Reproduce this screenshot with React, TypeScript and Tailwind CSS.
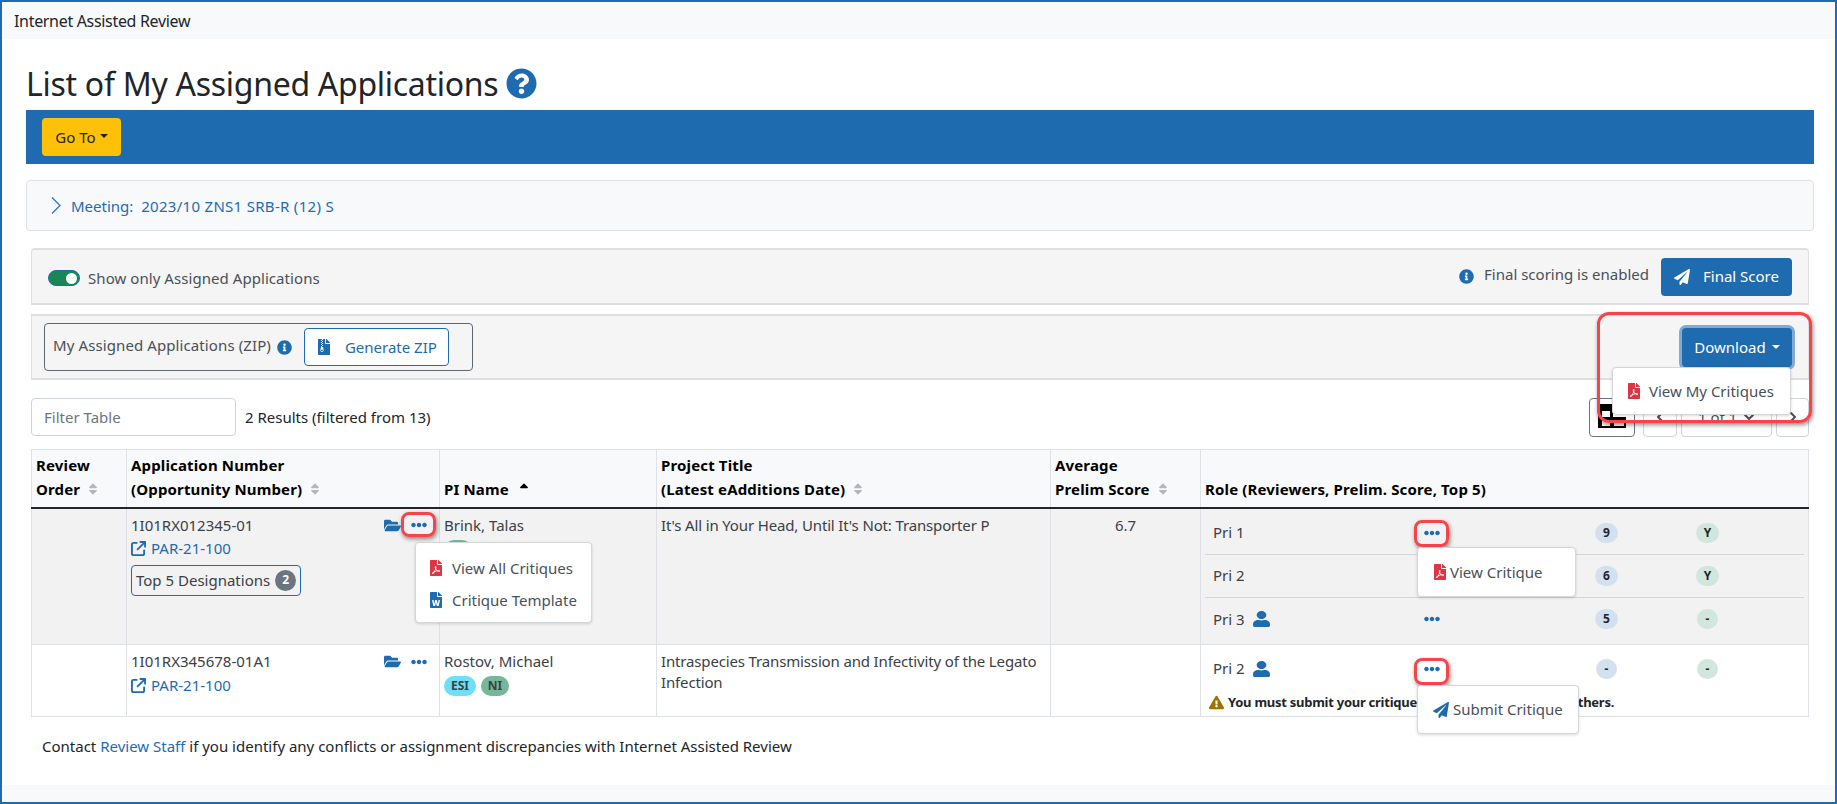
import { FaEllipsisH, FaExclamationTriangle, FaFileArchive, FaFilePdf, FaFileWord, FaFolderOpen, FaInfoCircle, FaPaperPlane, FaQuestionCircle, FaSort, FaSortUp, FaUser } from 'react-icons/fa'
import { FaArrowUpRightFromSquare } from 'react-icons/fa6'
import { ChevronDown, ChevronLeft, ChevronRight } from 'lucide-react'
import type { ReactNode } from 'react'

const BLUE = 'text-[#1f6bb0]'
const TH = 'border border-b-2 border-[#dee2e6] border-b-[#212529] px-1 pb-[6px] text-left leading-6 tracking-[0.01em]'

function RedBox({ className }: { className: string }) {
  return (
    <div
      className={`pointer-events-none absolute border-[3px] border-[#f8434b] shadow-[1px_2px_4px_rgba(0,0,0,0.45)] ${className}`}
    />
  )
}

function Menu({ className, children }: { className: string; children: ReactNode }) {
  return (
    <div className={`absolute z-10 rounded border border-[#d5d6d8] bg-white text-[#495057] shadow-[0_1px_3px_rgba(0,0,0,0.15)] ${className}`}>
      {children}
    </div>
  )
}

function Pill({ label, tone }: { label: string; tone: 'blue' | 'green' }) {
  const narrow = label === '-'
  return (
    <span
      className={`flex h-5 items-center justify-center rounded-full text-[12px] font-bold text-[#212529] ${
        tone === 'blue' ? 'bg-[#d2e1f0]' : 'bg-[#d1e7dd]'
      } ${narrow ? 'ml-px w-[21px]' : 'w-[23px]'}`}
    >
      {label}
    </span>
  )
}

function SortHead({ children }: { children: ReactNode }) {
  return (
    <span className="inline-flex items-center gap-1.5">
      {children}
      <FaSort className="size-[14px] text-[#b4b7ba]" />
    </span>
  )
}

function RoleRow({ label, user, a, b, line }: { label: string; user?: boolean; a: string; b: string; line?: boolean }) {
  return (
    <div className={`grid h-[43px] grid-cols-[211px_171px_101px_1fr] items-center pl-2 ${line ? 'border-b border-[#d5d6d8]' : ''}`}>
      <span className="flex items-center gap-2">
        {label}
        {user && <FaUser preserveAspectRatio="none" className={`h-4 w-[17px] ${BLUE}`} />}
      </span>
      <FaEllipsisH className={`size-4 ${BLUE}`} />
      <Pill label={a} tone="blue" />
      <Pill label={b} tone="green" />
    </div>
  )
}

function GridGlitch() {
  return (
    <svg viewBox="0 0 28 24" className="absolute top-[5px] left-[8px] h-6 w-7">
      <path d="M0 0h15v13h13v11H0z" fill="#000" />
      <rect x="4" y="7" width="8" height="6" fill="#fff" />
      <rect x="4" y="16" width="8" height="6" fill="#fff" />
      <rect x="16" y="16" width="10" height="6" fill="#fff" />
    </svg>
  )
}

export default function App() {
  return (
    <div className="relative h-[804px] w-[1837px] overflow-hidden border-2 border-[#1f6bb0] bg-white font-['Noto_Sans',sans-serif] text-[15px] text-[#212529]">
      <div className="flex h-[37px] items-center bg-[#f8f9fa] pl-3 text-base tracking-[-0.02em] shadow-[0_1px_2px_rgba(0,0,0,0.08)]">
        Internet Assisted Review
      </div>

      <div className="flex h-[763px] flex-col bg-white pr-[21px] pl-6">
        <h1 className="mt-[19px] mb-px flex h-[51px] items-center gap-2 text-[32px] leading-none tracking-[-0.28px]">
          List of My Assigned Applications
          <FaQuestionCircle className={`size-[31px] ${BLUE}`} />
        </h1>
        <div className="flex h-[54px] items-center bg-[#1f6bb0] pl-4">
          <button className="flex h-[38px] w-[79px] items-center justify-center gap-1 rounded bg-[#ffc107] text-[#212529]">
            Go To
            <span className="mb-0.5 border-x-[4px] border-t-[4px] border-x-transparent border-t-[#212529]" />
          </button>
        </div>

        <div className={`mt-4 flex h-[51px] items-center gap-2.5 rounded border border-[#dee2e6] bg-[#f8f9fa] pl-6 ${BLUE}`}>
          <svg viewBox="0 0 10 17" className="h-[17px] w-[10px]" fill="none" stroke="#2a6fc9" strokeWidth="1.2">
            <path d="M1 .5 9 8.5 1 16.5" />
          </svg>
          <span className="mt-0.5 whitespace-pre">
            Meeting:  <span className="tracking-[0.3px]">2023/10 ZNS1 SRB-R (12) S</span>
          </span>
        </div>

        <div className="mt-[17px] mr-[5px] ml-[5px] flex h-[57px] items-center justify-between rounded-t border-x border-y-2 border-[#dfdfdf] bg-[#f5f5f5] pr-4 pl-4 text-[#495057]">
          <div className="flex items-center gap-2 pt-[3px] tracking-[0.06px]">
            <span className="flex h-4 w-8 items-center justify-end rounded-full border border-[#1f6bb0] bg-[#198754] pr-0.5">
              <span className="size-[11px] rounded-full bg-white" />
            </span>
            Show only Assigned Applications
          </div>
          <div className="flex items-center">
            <FaInfoCircle className={`mr-2.5 size-[15px] ${BLUE}`} />
            <span className="mb-1">Final scoring is enabled</span>
            <button className="ml-3 flex h-[38px] w-[131px] items-center justify-center gap-[13px] rounded bg-[#1f6bb0] text-white">
              <FaPaperPlane className="size-4" />
              Final Score
            </button>
          </div>
        </div>

        <div className="mt-[9px] mr-[5px] ml-[5px] flex h-[66px] items-center justify-between border-x border-y-2 border-[#dfdfdf] bg-[#f5f5f5] pr-4 pl-[12px]">
          <div className="flex h-[48px] w-[429px] items-center rounded border border-[#5f6870] pl-[8px] text-[#495057]">
            <span className="mb-1 tracking-[0.1px]">My Assigned Applications (ZIP)</span>
            <FaInfoCircle className={`ml-1.5 size-[15px] ${BLUE}`} />
            <button className={`ml-3 flex h-[38px] w-[145px] items-center gap-[13px] rounded border border-[#1f6bb0] bg-white pl-[11px] ${BLUE}`}>
              <FaFileArchive className="size-4" />
              Generate ZIP
            </button>
          </div>
          <button className="flex h-[39px] w-[110px] items-center justify-center gap-1.5 rounded bg-[#1f6bb0] text-white shadow-[0_0_0_3px_#84a9d3]">
            Download
            <span className="border-x-[4px] border-t-[4px] border-x-transparent border-t-white" />
          </button>
        </div>

        <div className="mt-[18px] mr-[5px] ml-[5px] flex h-[38px] items-center">
          <div className="flex h-[38px] w-[205px] items-center rounded border border-[#ced4da] bg-white pl-3 text-[#6c757d]">
            Filter Table
          </div>
          <span className="ml-[9px]">2 Results (filtered from 13)</span>
          <div className="ml-auto flex items-center text-[#495057]">
            <div className="relative h-[39px] w-[46px] rounded border border-[#6c757d]">
              <GridGlitch />
            </div>
            <button className="ml-2 flex h-[39px] w-[34px] items-center justify-center rounded border border-[#ced4da]">
              <ChevronLeft className="size-4" strokeWidth={3} />
            </button>
            <div className="ml-1 flex h-[39px] w-[91px] items-center justify-between rounded border border-[#ced4da] pr-[14px] pl-4">
              1 of 1
              <ChevronDown className="size-4" strokeWidth={3} />
            </div>
            <button className="ml-1 flex h-[39px] w-[33px] items-center justify-center rounded border border-[#ced4da]">
              <ChevronRight className="size-4" strokeWidth={3} />
            </button>
          </div>
        </div>

        <table className="mt-[13px] mr-[5px] ml-[5px] w-[1778px] table-fixed border-collapse text-[#3a4046]">
          <colgroup>
            <col className="w-[95px]" />
            <col className="w-[313px]" />
            <col className="w-[217px]" />
            <col className="w-[394px]" />
            <col className="w-[150px]" />
            <col />
          </colgroup>
          <thead>
            <tr className="h-[58px] border-b-2 border-[#212529] bg-[#f8f9fa] align-bottom font-bold text-black">
              <th className={TH}>
                Review
                <br />
                <SortHead>Order</SortHead>
              </th>
              <th className={TH}>
                Application Number
                <br />
                <SortHead>(Opportunity Number)</SortHead>
              </th>
              <th className={TH}>
                <span className="inline-flex items-center gap-2">
                  PI Name
                  <FaSortUp className="size-[14px] text-black" />
                </span>
              </th>
              <th className={TH}>
                Project Title
                <br />
                <SortHead>(Latest eAdditions Date)</SortHead>
              </th>
              <th className={TH}>
                Average
                <br />
                <SortHead>Prelim Score</SortHead>
              </th>
              <th className={TH}>Role (Reviewers, Prelim. Score, Top 5)</th>
            </tr>
          </thead>
          <tbody>
            <tr className="h-[137px] bg-[#f2f2f2] align-top">
              <td className="border border-[#dee2e6]" />
              <td className="border border-[#dee2e6] px-1 pt-[6px]">
                <div className="flex items-center justify-between pr-[8px] leading-[21px]">
                  1I01RX012345-01
                  <span className="flex items-center gap-[10px]">
                    <FaFolderOpen className={`size-[17px] ${BLUE}`} />
                    <FaEllipsisH className={`size-4 ${BLUE}`} />
                  </span>
                </div>
                <div className={`mt-[2px] flex items-center gap-[5px] leading-[21px] ${BLUE}`}>
                  <FaArrowUpRightFromSquare className="size-[15px]" />
                  PAR-21-100
                </div>
                <div className="mt-[6px] flex h-[31px] w-[170px] items-center gap-[5px] rounded border border-[#1f6bb0] pl-1">
                  Top 5 Designations
                  <span className="flex size-[21px] items-center justify-center rounded-full bg-[#6c757d] text-xs font-bold text-white">
                    2
                  </span>
                </div>
              </td>
              <td className="border border-[#dee2e6] px-1 pt-[6px]">
                <div className="leading-[21px]">Brink, Talas</div>
                <div className="mt-[4px] flex h-5 w-[28px] items-center justify-center rounded-full bg-[#75b798] text-xs font-bold">
                  NI
                </div>
              </td>
              <td className="border border-[#dee2e6] px-1 pt-[6px] leading-[21px] tracking-[-0.15px]">
                It's All in Your Head, Until It's Not: Transporter P
              </td>
              <td className="border border-[#dee2e6] px-1 pt-[6px] text-center leading-[21px]">6.7</td>
              <td className="border border-[#dee2e6] px-1 pt-[3px]">
                <RoleRow label="Pri 1" a="9" b="Y" line />
                <RoleRow label="Pri 2" a="6" b="Y" line />
                <RoleRow label="Pri 3" user a="5" b="-" />
              </td>
            </tr>
            <tr className="h-[72px] align-top">
              <td className="border border-[#dee2e6]" />
              <td className="border border-[#dee2e6] px-1 pt-[6px]">
                <div className="flex items-center justify-between pr-[8px] leading-[21px]">
                  1I01RX345678-01A1
                  <span className="flex items-center gap-[10px]">
                    <FaFolderOpen className={`size-[17px] ${BLUE}`} />
                    <FaEllipsisH className={`size-4 ${BLUE}`} />
                  </span>
                </div>
                <div className={`mt-[3px] flex items-center gap-[5px] leading-[21px] ${BLUE}`}>
                  <FaArrowUpRightFromSquare className="size-[15px]" />
                  PAR-21-100
                </div>
              </td>
              <td className="border border-[#dee2e6] px-1 pt-[6px]">
                <div className="leading-[21px]">Rostov, Michael</div>
                <div className="mt-[4px] flex gap-[5px] text-xs font-bold">
                  <span className="flex h-5 w-8 items-center justify-center rounded-full bg-[#6edff6]">ESI</span>
                  <span className="flex h-5 w-[28px] items-center justify-center rounded-full bg-[#75b798]">NI</span>
                </div>
              </td>
              <td className="border border-[#dee2e6] px-1 pt-[6px] leading-[21px] tracking-[-0.15px]">
                Intraspecies Transmission and Infectivity of the Legato Infection
              </td>
              <td className="border border-[#dee2e6]" />
              <td className="border border-[#dee2e6] px-1 pt-[2px]">
                <RoleRow label="Pri 2" user a="-" b="-" />
                <div className="mt-[3px] flex items-center gap-1 pl-1 text-[13px] font-bold tracking-[-0.02em] text-[#212529]">
                  <FaExclamationTriangle className="size-[15px] text-[#997404]" />
                  You must submit your critique before viewing those of others.
                </div>
              </td>
            </tr>
          </tbody>
        </table>

        <p className="mt-[18px] ml-[16px]">
          Contact <span className={BLUE}>Review Staff</span> if you identify any conflicts or assignment discrepancies with Internet Assisted Review
        </p>
      </div>

      <div className="absolute inset-x-0 bottom-0 h-[17px] bg-[#f8f9fa]" />

      <RedBox className="top-[310px] left-[1595px] h-[111px] w-[215px] rounded-xl" />
      <Menu className="top-[365px] left-[1610px] flex h-12 w-[179px] items-center gap-[7px] pl-[13px]">
        <FaFilePdf className="size-4 text-[#dc3545]" />
        View My Critiques
      </Menu>

      <RedBox className="top-[510px] left-[399px] h-[25px] w-[35px] rounded-lg" />
      <Menu className="top-[540px] left-[413px] h-[81px] w-[177px] pt-[9px] pl-[12px]">
        <div className="flex h-8 items-center gap-2">
          <FaFilePdf className="size-4 text-[#dc3545]" />
          View All Critiques
        </div>
        <div className="flex h-8 items-center gap-2">
          <FaFileWord className={`size-4 ${BLUE}`} />
          Critique Template
        </div>
      </Menu>

      <RedBox className="top-[518px] left-[1412px] h-[27px] w-[35px] rounded-lg" />
      <Menu className="top-[545px] left-[1415px] flex h-[50px] w-[159px] items-center gap-[2px] pl-[14px]">
        <FaFilePdf className="size-4 text-[#dc3545]" />
        View Critique
      </Menu>

      <RedBox className="top-[656px] left-[1412px] h-[27px] w-[35px] rounded-lg" />
      <Menu className="top-[683px] left-[1415px] flex h-[49px] w-[162px] items-center gap-1 pl-[15px]">
        <FaPaperPlane className={`size-4 ${BLUE}`} />
        Submit Critique
      </Menu>
    </div>
  )
}
